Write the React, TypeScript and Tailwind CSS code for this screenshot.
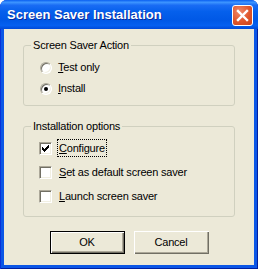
import React from 'react';

function Radio({ checked }: { checked?: boolean }) {
  return (
    <span className="flex h-[12px] w-[12px] shrink-0 items-center justify-center rounded-full border border-t-[#aca899] border-l-[#aca899] border-r-white border-b-white bg-white shadow-[inset_1px_1px_#716f64,inset_-1px_-1px_#f1efe2]">
      {checked && <span className="h-[4px] w-[4px] rounded-full bg-black" />}
    </span>
  );
}

function Check({ checked }: { checked?: boolean }) {
  return (
    <span className="flex h-[13px] w-[13px] shrink-0 items-center justify-center border border-t-[#aca899] border-l-[#aca899] border-r-white border-b-white bg-white shadow-[inset_1px_1px_#716f64,inset_-1px_-1px_#f1efe2]">
      {checked && (
        <svg width="7" height="7" viewBox="0 0 7 7" shapeRendering="crispEdges">
          <path d="M0 2h1v3h-1zM1 3h1v3h-1zM2 4h1v3h-1zM3 3h1v3h-1zM4 2h1v3h-1zM5 1h1v3h-1zM6 0h1v3h-1z" fill="#000" />
        </svg>
      )}
    </span>
  );
}

function Key({ k, rest }: { k: string; rest: string }) {
  return (
    <>
      <span className="underline underline-offset-[1px]">{k}</span>
      {rest}
    </>
  );
}

function Group({ title, children, className }: { title: string; children: React.ReactNode; className?: string }) {
  return (
    <fieldset className={`mx-[19px] rounded-[3px] border border-[#d0d0bf] pl-[7px] ${className ?? ''}`}>
      <legend className="px-[2px] leading-[13px]">{title}</legend>
      {children}
    </fieldset>
  );
}

export default function App() {
  return (
    <div className="flex h-[269px] w-[258px] flex-col overflow-hidden rounded-t-[7px] bg-[#0b56e6] text-[11px] tracking-[-0.2px] text-black shadow-[inset_1px_0_#0831d9,inset_-1px_-1px_#001ea0] [font-family:'Liberation_Sans',Arial,sans-serif]">
      <div className="flex h-[29px] shrink-0 items-center justify-between bg-[linear-gradient(180deg,#0a5ff0_0%,#3d95ff_8%,#1a6cf4_18%,#0560ec_40%,#0058e6_70%,#0560f0_88%,#0049d8_100%)] pl-[7px] pr-[5px] pt-[1px]">
        <span className="text-[13px] font-bold tracking-normal text-white [text-shadow:1px_1px_#0c2a99]">
          Screen Saver Installation
        </span>
        <span className="flex h-[21px] w-[21px] items-center justify-center rounded-[3px] border border-white bg-[radial-gradient(circle_at_35%_30%,#f0896a_0%,#e0562c_55%,#c8431c_100%)]">
          <svg width="13" height="13" viewBox="0 0 13 13">
            <path d="M2 2L11 11M11 2L2 11" stroke="#fff" strokeWidth="2.4" strokeLinecap="square" />
          </svg>
        </span>
      </div>
      <div className="mx-[4px] mb-[4px] flex flex-1 flex-col bg-[#ece9d8]">
        <Group title="Screen Saver Action" className="mt-[10px] pb-[6px] pt-[5px]">
          <div className="ml-[9px] flex flex-col">
            <label className="flex h-[21px] items-center gap-[6px]">
              <Radio />
              <span><Key k="T" rest="est only" /></span>
            </label>
            <label className="flex h-[21px] items-center gap-[6px]">
              <Radio checked />
              <span><Key k="I" rest="nstall" /></span>
            </label>
          </div>
        </Group>
        <Group title="Installation options" className="mt-[14px] pb-[8px] pt-[3px]">
          <div className="ml-[8px] flex flex-col">
            <label className="flex h-[24px] items-center gap-[5px]">
              <Check checked />
              <span className="border border-dotted border-black px-[1px] py-[1px] leading-[14px]"><Key k="C" rest="onfigure" /></span>
            </label>
            <label className="flex h-[24px] items-center gap-[5px]">
              <Check />
              <span className="border border-transparent px-[1px] py-[1px] leading-[14px]"><Key k="S" rest="et as default screen saver" /></span>
            </label>
            <label className="flex h-[24px] items-center gap-[5px]">
              <Check />
              <span className="border border-transparent px-[1px] py-[1px] leading-[14px]"><Key k="L" rest="aunch screen saver" /></span>
            </label>
          </div>
        </Group>
        <div className="mt-[14px] flex justify-center gap-[9px]">
          <button className="h-[23px] w-[75px] border border-black bg-[#ece9d8] shadow-[inset_1px_1px_#fff,inset_-1px_-1px_#716f64,inset_-2px_-2px_#aca899]">
            OK
          </button>
          <button className="h-[23px] w-[75px] bg-[#ece9d8] shadow-[inset_1px_1px_#fff,inset_-1px_-1px_#716f64,inset_-2px_-2px_#aca899]">
            Cancel
          </button>
        </div>
      </div>
    </div>
  );
}
